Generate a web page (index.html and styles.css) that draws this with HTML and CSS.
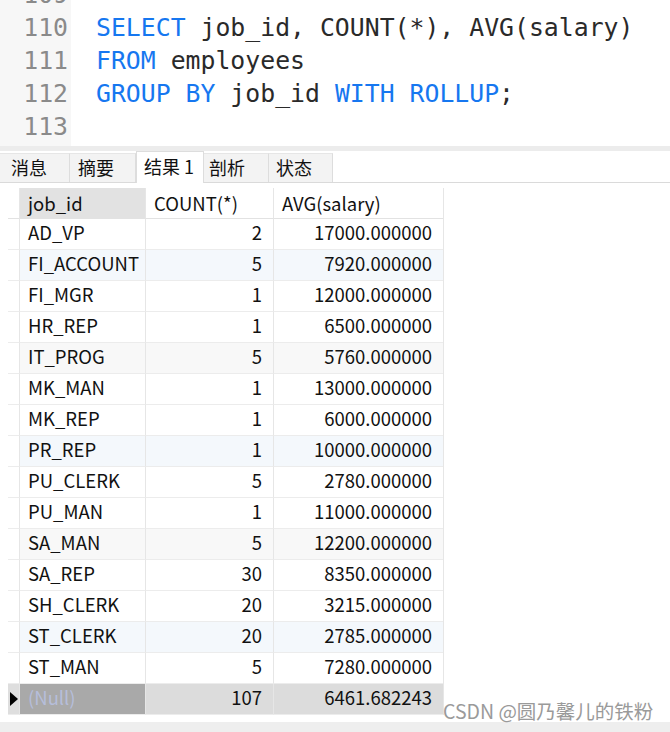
FILE: index.html
```html
<!DOCTYPE html>
<html lang="zh-CN">
<head>
<meta charset="utf-8">
<title>Query result</title>
<link rel="stylesheet" href="styles.css">
</head>
<body>
<div class="page">
  <div class="editor">
    <div class="gutter">
      <div class="ln">109</div>
      <div class="ln">110</div>
      <div class="ln">111</div>
      <div class="ln">112</div>
      <div class="ln">113</div>
    </div>
    <div class="code">
      <div class="line">&nbsp;</div>
      <div class="line"><span class="kw">SELECT</span> job_id, COUNT(*), AVG(salary)</div>
      <div class="line"><span class="kw">FROM</span> employees</div>
      <div class="line"><span class="kw">GROUP BY</span> job_id <span class="kw">WITH ROLLUP</span>;</div>
      <div class="line">&nbsp;</div>
    </div>
  </div>
  <div class="band"></div>
  <div class="tabs">
    <div class="tab t1">消息</div>
    <div class="tab t2">摘要</div>
    <div class="tab t3 active">结果 1</div>
    <div class="tab t4">剖析</div>
    <div class="tab t5">状态</div>
  </div>
  <div class="results">
    <div class="grid">
      <div class="c ind hd"></div><div class="c hd sel">job_id</div><div class="c hd">COUNT(*)</div><div class="c hd">AVG(salary)</div>

      <div class="c ind"></div><div class="c">AD_VP</div><div class="c num">2</div><div class="c num">17000.000000</div>
      <div class="c ind"></div><div class="c tb">FI_ACCOUNT</div><div class="c num tb">5</div><div class="c num tb">7920.000000</div>
      <div class="c ind"></div><div class="c">FI_MGR</div><div class="c num">1</div><div class="c num">12000.000000</div>
      <div class="c ind"></div><div class="c">HR_REP</div><div class="c num">1</div><div class="c num">6500.000000</div>
      <div class="c ind"></div><div class="c tg">IT_PROG</div><div class="c num tg">5</div><div class="c num tg">5760.000000</div>
      <div class="c ind"></div><div class="c">MK_MAN</div><div class="c num">1</div><div class="c num">13000.000000</div>
      <div class="c ind"></div><div class="c">MK_REP</div><div class="c num">1</div><div class="c num">6000.000000</div>
      <div class="c ind"></div><div class="c tb">PR_REP</div><div class="c num tb">1</div><div class="c num tb">10000.000000</div>
      <div class="c ind"></div><div class="c">PU_CLERK</div><div class="c num">5</div><div class="c num">2780.000000</div>
      <div class="c ind"></div><div class="c">PU_MAN</div><div class="c num">1</div><div class="c num">11000.000000</div>
      <div class="c ind"></div><div class="c tg">SA_MAN</div><div class="c num tg">5</div><div class="c num tg">12200.000000</div>
      <div class="c ind"></div><div class="c">SA_REP</div><div class="c num">30</div><div class="c num">8350.000000</div>
      <div class="c ind"></div><div class="c">SH_CLERK</div><div class="c num">20</div><div class="c num">3215.000000</div>
      <div class="c ind"></div><div class="c tb">ST_CLERK</div><div class="c num tb">20</div><div class="c num tb">2785.000000</div>
      <div class="c ind"></div><div class="c">ST_MAN</div><div class="c num">5</div><div class="c num">7280.000000</div>

      <div class="c ind cur"><svg class="arrow" width="8" height="14" viewBox="0 0 8 14"><polygon points="0,0 8,7 0,14" fill="#000"/></svg></div><div class="c nullcell">(Null)</div><div class="c num tot">107</div><div class="c num tot">6461.682243</div>
    </div>
    <div class="watermark">CSDN @圆乃馨儿的铁粉</div>
  </div>
  <div class="footer"></div>
</div>
</body>
</html>
```
FILE: styles.css
```css
html, body {
  margin: 0;
  padding: 0;
  background: #ffffff;
}
.page {
  width: 670px;
  height: 732px;
  overflow: hidden;
  position: relative;
  font-family: "Noto Sans CJK SC", "Noto Sans", sans-serif;
}
.editor {
  display: flex;
  height: 146px;
  overflow: hidden;
  background: #ffffff;
}
.gutter {
  flex: none;
  width: 71px;
  background: #f7f7f7;
  margin-top: -22px;
  box-sizing: border-box;
  padding-right: 3px;
  text-align: right;
  font-family: "DejaVu Sans Mono", monospace;
  font-size: 24.8px;
  line-height: 33px;
  color: #8a8a8a;
}
.code {
  margin-top: -22px;
  padding-left: 25px;
  font-family: "DejaVu Sans Mono", monospace;
  font-size: 24.8px;
  line-height: 33px;
  color: #2a2a2a;
}
.line { white-space: pre; }
.kw { color: #1677f0; }
.band {
  height: 5px;
  background: #ececec;
}
.tabs {
  display: flex;
  align-items: flex-end;
  height: 31px;
  border-bottom: 1px solid #dadada;
  background: #ffffff;
}
.tab {
  height: 29px;
  box-sizing: border-box;
  background: #f3f3f3;
  border-right: 1px solid #dddddd;
  border-top: 1px solid #e6e6e6;
  font-size: 18px;
  line-height: 27px;
  color: #111;
  padding-left: 10px;
}
.t1 { width: 70px; padding-left: 11px; }
.t2 { width: 66px; padding-left: 8px; }
.t3 { width: 68px; padding-left: 7px; }
.t4 { width: 65px; padding-left: 5px; }
.t5 { width: 64px; padding-left: 7px; border-right: 1px solid #dddddd; }
.tab.active {
  height: 32px;
  margin-bottom: -1px;
  background: #ffffff;
  border: 1px solid #dddddd;
  border-bottom: none;
  line-height: 28px;
  padding-bottom: 3px;
}
.results {
  position: relative;
  height: 539px;
  padding-left: 8px;
  padding-top: 5px;
  box-sizing: border-box;
  background: #ffffff;
}
.grid {
  display: grid;
  grid-template-columns: 12px 126px 128px 169px;
  grid-auto-rows: 31px;
  width: 435px;
  border-right: 1px solid #e6e6e6;
}
.c {
  box-sizing: border-box;
  border-right: 1px solid #e6e6e6;
  border-bottom: 1px solid #ececec;
  padding: 0 8px;
  font-size: 18.5px;
  line-height: 27px;
  color: #111;
  white-space: nowrap;
  overflow: hidden;
  font-family: "Noto Sans CJK SC", "Noto Sans", sans-serif;
}
.hd { line-height: 30px; }
.c:nth-child(4n) { border-right: none; }
.ind { padding: 0; background: #ffffff; }
.hd { background: #ffffff; border-bottom: 1px solid #e2e2e2; }
.hd.sel { background: #e2e2e2; }
.num { text-align: right; padding-right: 11px; }
.tb { background: #f4f8fc; }
.tg { background: #f8f8f8; }
.cur {
  background: #dedede;
  display: flex;
  align-items: center;
  justify-content: center;
}
.arrow { display: block; margin-left: 1px; }
.nullcell { background: #a9a9a9; color: #b6bedb; }
.tot { background: #dcdcdc; }
.watermark {
  position: absolute;
  left: 443px;
  top: 516px;
  font-size: 19.5px;
  line-height: 24px;
  color: #9a9a9a;
  white-space: nowrap;
  font-family: "Noto Sans CJK SC", sans-serif;
}
.footer {
  height: 10px;
  background: #eeeeee;
}
```
